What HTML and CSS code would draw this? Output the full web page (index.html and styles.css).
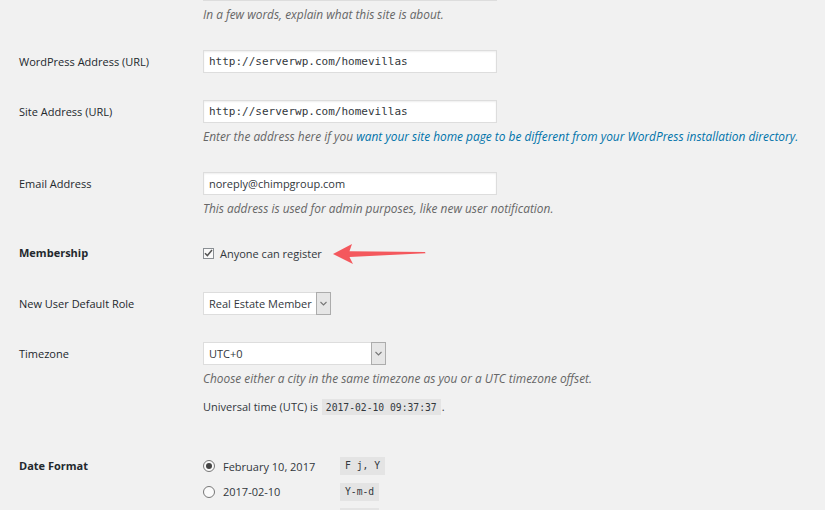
FILE: index.html
```html
<!DOCTYPE html>
<html lang="en">
<head>
<meta charset="utf-8">
<title>General Settings</title>
<link rel="stylesheet" href="styles.css">
</head>
<body>
<div class="page">
  <div class="row row-top">
    <div class="label"></div>
    <div class="field">
      <div class="input"></div>
      <p class="desc">In a few words, explain what this site is about.</p>
    </div>
  </div>

  <div class="row">
    <div class="label">WordPress Address (URL)</div>
    <div class="field">
      <div class="input mono">http://serverwp.com/homevillas</div>
    </div>
  </div>

  <div class="row">
    <div class="label">Site Address (URL)</div>
    <div class="field">
      <div class="input mono">http://serverwp.com/homevillas</div>
      <p class="desc">Enter the address here if you <a href="#">want your site home page to be different from your WordPress installation directory.</a></p>
    </div>
  </div>

  <div class="row">
    <div class="label">Email Address</div>
    <div class="field">
      <div class="input">noreply@chimpgroup.com</div>
      <p class="desc">This address is used for admin purposes, like new user notification.</p>
    </div>
  </div>

  <div class="row row-member">
    <div class="label strong">Membership</div>
    <div class="field check-line">
      <span class="checkbox">
        <svg width="9" height="8" viewBox="0 0 9 8"><polyline points="1,4.2 3.4,6.6 8,1" fill="none" stroke="#555" stroke-width="1.5"/></svg>
      </span>
      <span class="check-text">Anyone can register</span>
      <svg class="arrow" width="95" height="22" viewBox="0 0 95 22"><polygon points="0,11 19,1 16.5,8.2 92,9 92.5,10.2 16.5,14 20,21" fill="#f4585d"/></svg>
    </div>
  </div>

  <div class="row">
    <div class="label">New User Default Role</div>
    <div class="field">
      <div class="select select-role"><span class="select-text">Real Estate Member</span><span class="select-btn"><svg width="7" height="5" viewBox="0 0 7 5"><polyline points="0.5,1 3.5,4 6.5,1" fill="none" stroke="#777" stroke-width="1.1"/></svg></span></div>
    </div>
  </div>

  <div class="row">
    <div class="label">Timezone</div>
    <div class="field">
      <div class="select select-tz"><span class="select-text">UTC+0</span><span class="select-btn"><svg width="7" height="5" viewBox="0 0 7 5"><polyline points="0.5,1 3.5,4 6.5,1" fill="none" stroke="#777" stroke-width="1.1"/></svg></span></div>
      <p class="desc">Choose either a city in the same timezone as you or a UTC timezone offset.</p>
      <p class="utc">Universal time (<abbr>UTC</abbr>) is <code>2017-02-10 09:37:37</code>.</p>
    </div>
  </div>

  <div class="row row-date">
    <div class="label strong">Date Format</div>
    <div class="field radios">
      <div class="radio-line"><span class="radio on"></span><span class="radio-text">February 10, 2017</span><code>F j, Y</code></div>
      <div class="radio-line"><span class="radio"></span><span class="radio-text">2017-02-10</span><code>Y-m-d</code></div>
      <div class="radio-line"><span class="radio radio-hidden"></span><span class="radio-text"></span><span class="code-stub"></span></div>
    </div>
  </div>
</div>
</body>
</html>
```

FILE: styles.css
```css
html, body {
  margin: 0;
  padding: 0;
  background: #f1f1f1;
}

body {
  font-family: "Open Sans", "Noto Sans", sans-serif;
  font-size: 11px;
  color: #23282d;
  overflow: hidden;
  height: 510px;
}

.page {
  margin-top: -22px;
  padding-left: 19px;
}

.row {
  display: grid;
  grid-template-columns: 184px 1fr;
  margin-top: 27px;
}

.row-top {
  margin-top: 0;
}

.label {
  line-height: 24px;
  height: 23px;
  color: #23282d;
}

.strong {
  font-weight: 700;
}

.field {
  min-width: 0;
}

.input {
  box-sizing: border-box;
  width: 294px;
  height: 23px;
  background: #fff;
  border: 1px solid #ddd;
  box-shadow: inset 0 1px 2px rgba(0, 0, 0, 0.07);
  padding: 0 5px;
  line-height: 22px;
  color: #32373c;
  white-space: nowrap;
}

.mono {
  font-family: "DejaVu Sans Mono", "Liberation Mono", monospace;
  font-size: 11px;
}

.desc {
  margin: 4px 0 0;
  line-height: 18px;
  font-size: 11.9px;
  font-style: italic;
  color: #666;
  white-space: nowrap;
}

.desc a {
  color: #0073aa;
  text-decoration: none;
}

.row-member {
  margin-top: 24px;
}

.check-line {
  display: flex;
  align-items: center;
  height: 24px;
}

.checkbox {
  box-sizing: border-box;
  width: 11px;
  height: 11px;
  border: 1px solid #8a8f94;
  background: #fafafa;
  display: flex;
  align-items: center;
  justify-content: center;
  margin-right: 6px;
}

.check-text {
  color: #32373c;
}

.arrow {
  margin-left: 11px;
  margin-top: 1px;
}

.select {
  box-sizing: border-box;
  height: 23px;
  background: #fff;
  border: 1px solid #ddd;
  display: flex;
  align-items: stretch;
}

.select-role {
  width: 128px;
}

.select-tz {
  width: 183px;
}

.select-text {
  flex: 1;
  padding-left: 5px;
  line-height: 21px;
  color: #32373c;
  white-space: nowrap;
  overflow: hidden;
}

.select-btn {
  width: 13px;
  margin: -1px -1px -1px 0;
  background: #e6e6e6;
  border: 1px solid #acacac;
  display: flex;
  align-items: center;
  justify-content: center;
}

.utc {
  margin: 11px 0 0;
  line-height: 18px;
  color: #32373c;
}

abbr {
  text-decoration: none;
}

code {
  font-family: "DejaVu Sans Mono", "Liberation Mono", monospace;
  font-size: 9.7px;
  background: #e4e4e4;
  padding: 3px 4px 2px;
  margin: 0 1px;
  color: #32373c;
}

.row-date {
  margin-top: 40px;
}

.row-date .label {
  line-height: 18px;
  height: 18px;
}

.radios {
  display: flex;
  flex-direction: column;
  gap: 7.5px;
}

.radio-line {
  display: flex;
  align-items: center;
  height: 18px;
}

.radio {
  box-sizing: border-box;
  width: 12px;
  height: 12px;
  border: 1px solid #777;
  border-radius: 50%;
  background: #fafafa;
  margin-right: 8px;
  display: flex;
  align-items: center;
  justify-content: center;
}

.radio-hidden {
  visibility: hidden;
}

.radio.on::after {
  content: "";
  width: 6px;
  height: 6px;
  border-radius: 50%;
  background: #444;
}

.radio-text {
  width: 117px;
  color: #32373c;
}

.radio-line code {
  margin: 0;
  padding: 2px 5px;
  line-height: 14px;
}

.code-stub {
  width: 39px;
  height: 18px;
  background: #e4e4e4;
}
```
